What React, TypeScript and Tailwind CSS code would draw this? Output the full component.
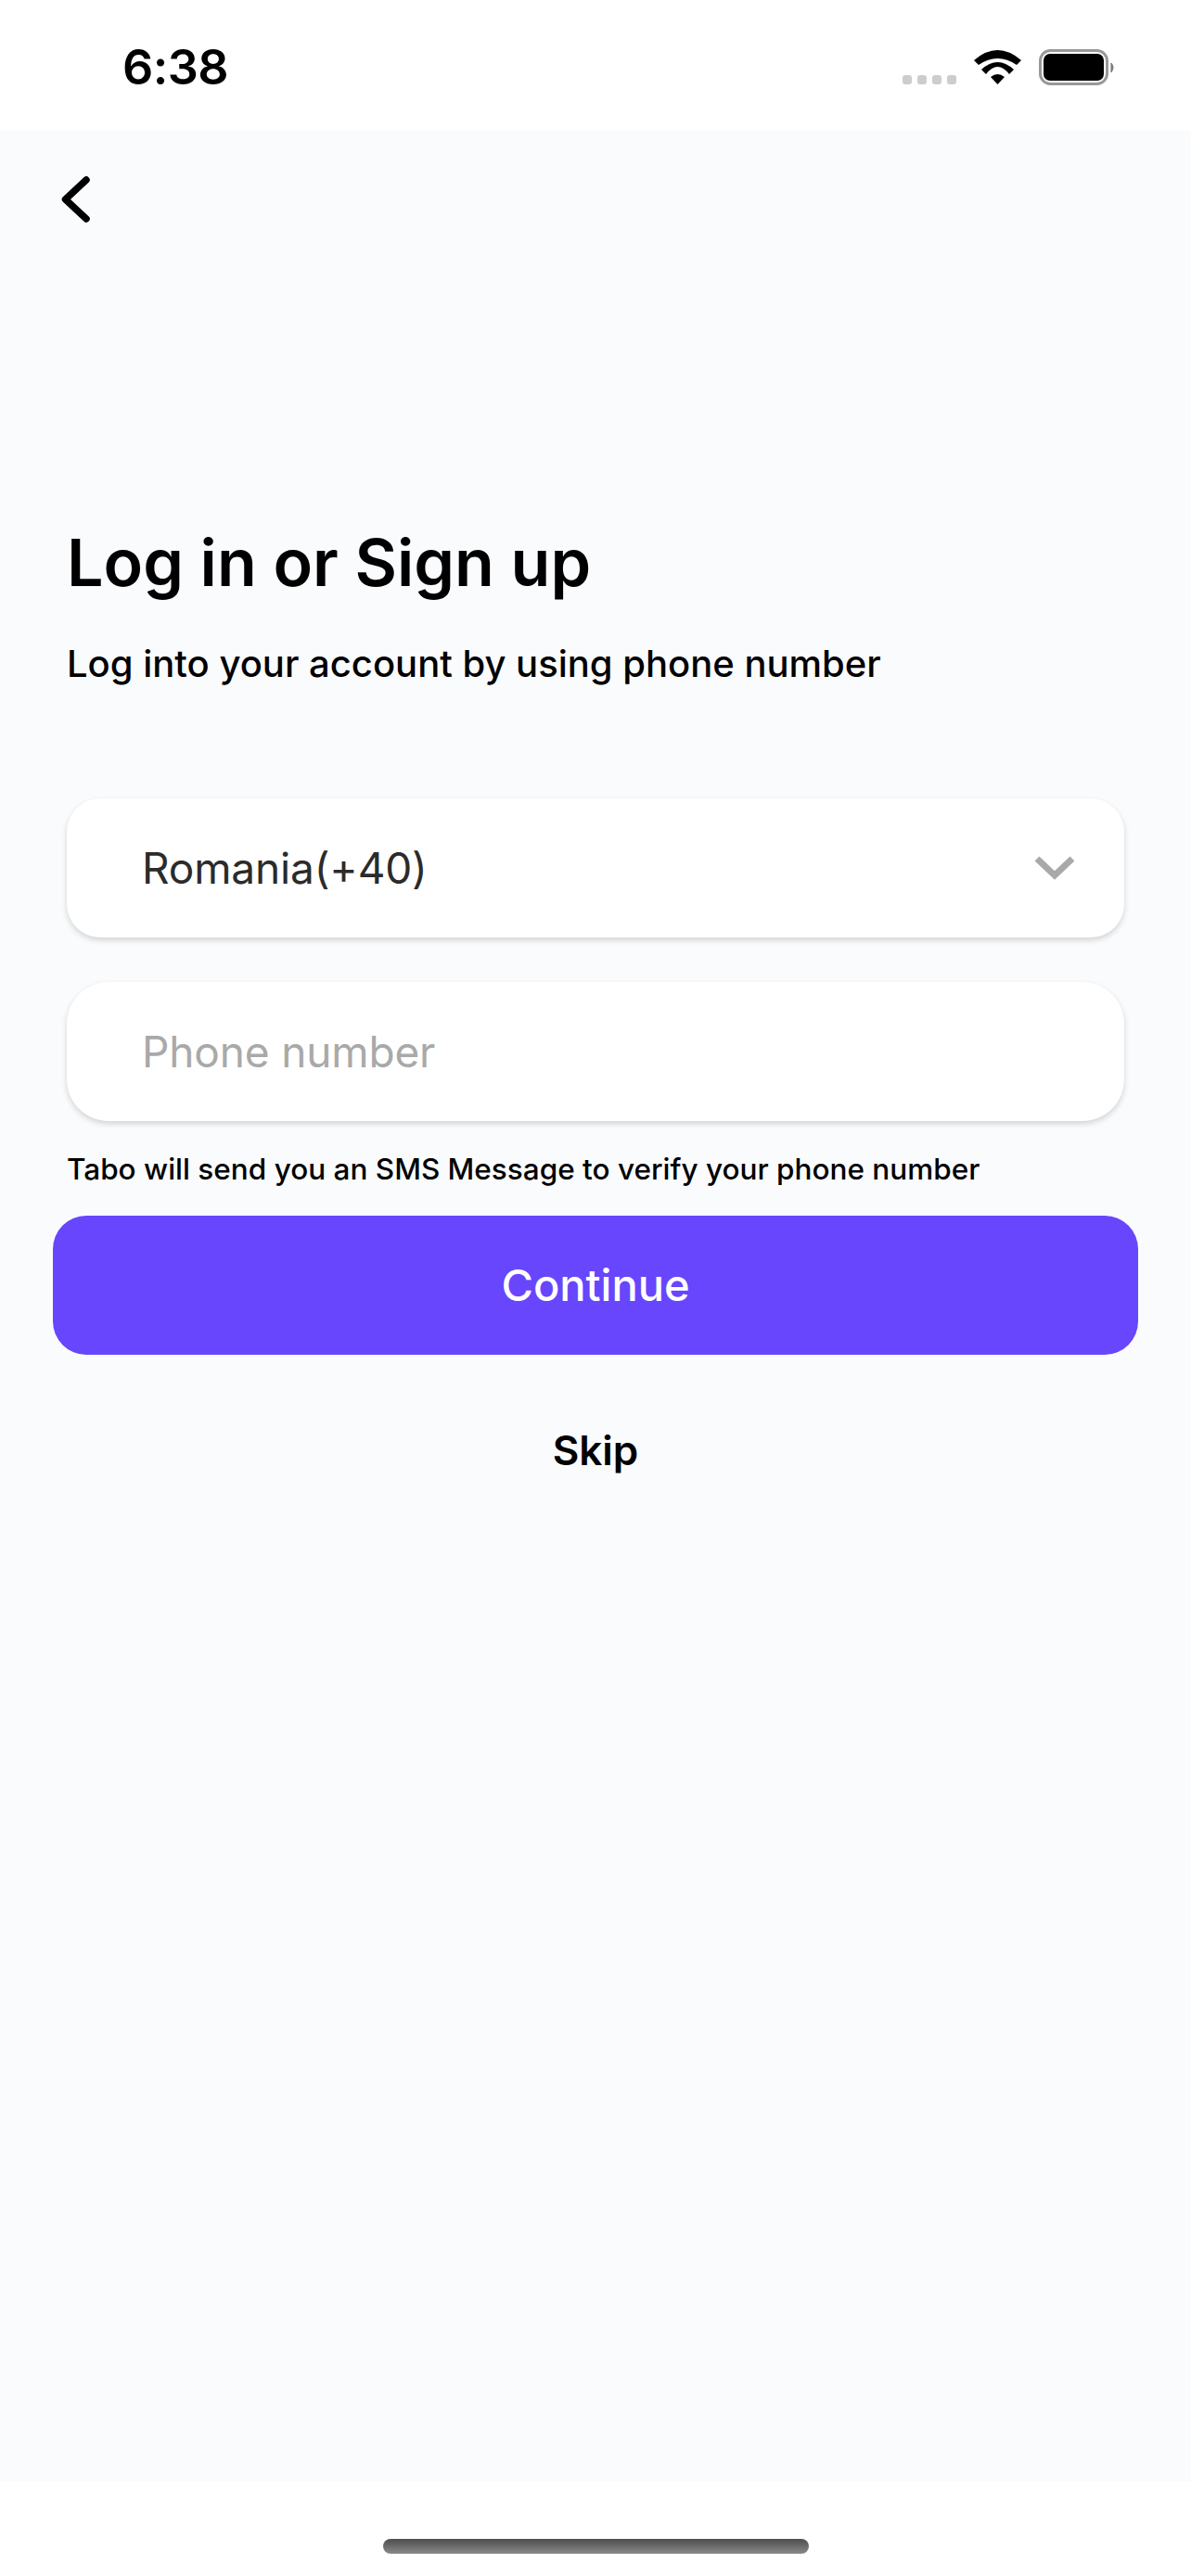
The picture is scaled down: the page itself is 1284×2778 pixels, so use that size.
export default function App() {
  return (
    <div className="w-[1284px] h-[2778px] flex flex-col bg-white overflow-hidden font-['Inter','sans-serif'] text-black">
      <div className="h-[141px] shrink-0 flex items-start justify-between pl-[132px] pr-[71px] pt-[46px]">
        <span className="text-[52px] leading-[54px] font-semibold tracking-[-0.6px]">6:38</span>
        <svg width="240" height="44" viewBox="0 0 240 44" className="mt-[7px]">
          <g fill="#cdcdcd">
            <rect x="0" y="28" width="10" height="10" rx="3" />
            <rect x="16" y="28" width="10" height="10" rx="3" />
            <rect x="32" y="28" width="10" height="10" rx="3" />
            <rect x="48" y="28" width="10" height="10" rx="3" />
          </g>
          <path d="M77 12 Q102.5 -10 128 12 L123 17 Q102.5 3 82 17 Z" fill="#000" />
          <path d="M85 22 Q102.5 6 120 22 L115 27 Q102.5 11 90 27 Z" fill="#000" />
          <path d="M95 30 Q102.5 24 110 30 L102.5 38 Z" fill="#000" />
          <rect x="148.5" y="1.5" width="72" height="36" rx="11" fill="none" stroke="#999" strokeWidth="3" />
          <rect x="152" y="5" width="65" height="29" rx="7" fill="#000" />
          <path d="M225 15 Q229 19.5 225 25 Z" fill="#777" stroke="#777" strokeWidth="1" />
        </svg>
      </div>
      <div className="flex-1 bg-[#fafbfd] flex flex-col">
        <div className="h-[84px] pl-[65px] pt-[49px]">
          <svg width="34" height="50" viewBox="0 0 34 50">
            <path d="M28 4 L5.5 25 L28 46" fill="none" stroke="#000" strokeWidth="7.5" strokeLinecap="round" strokeLinejoin="round" />
          </svg>
        </div>
        <h1 className="mt-[337px] pl-[72px] text-[70px] leading-[90px] font-semibold">Log in or Sign up</h1>
        <p className="mt-[39px] pl-[72px] text-[40px] leading-[50px] font-medium">Log into your account by using phone number</p>
        <div className="mt-[120px] mx-[72px] h-[150px] bg-white rounded-[36px] shadow-[0_3px_6px_rgba(0,0,0,0.16)] flex items-center justify-between pl-[81px] pr-[52px]">
          <span className="text-[46px] tracking-[-0.15px] text-[#2b2b2b]">Romania(+40)</span>
          <svg width="46" height="30" viewBox="0 0 46 30">
            <path d="M4 5 L23 23 L42 5" fill="none" stroke="#a9a9a9" strokeWidth="7" />
          </svg>
        </div>
        <div className="mt-[48px] mx-[72px] h-[150px] bg-white rounded-[45px] shadow-[0_3px_6px_rgba(0,0,0,0.16)] flex items-center pl-[81px]">
          <span className="text-[46px] tracking-[-0.15px] text-[#a9a9a9]">Phone number</span>
        </div>
        <p className="mt-[30px] pl-[72px] text-[31.5px] leading-[44px] font-medium">Tabo will send you an SMS Message to verify your phone number</p>
        <div className="mt-[28px] mx-[57px] h-[150px] bg-[#6746fd] rounded-[36px] flex items-center justify-center text-white text-[47px] font-medium">Continue</div>
        <div className="mt-[76px] text-center text-[44px] leading-[54px] font-semibold">Skip</div>
      </div>
      <div className="h-[102px] shrink-0 flex justify-center pt-[62px]">
        <div className="w-[459px] h-[16px] rounded-full bg-gradient-to-b from-[#4d4d4d] to-[#8a8a8a]" />
      </div>
    </div>
  );
}
